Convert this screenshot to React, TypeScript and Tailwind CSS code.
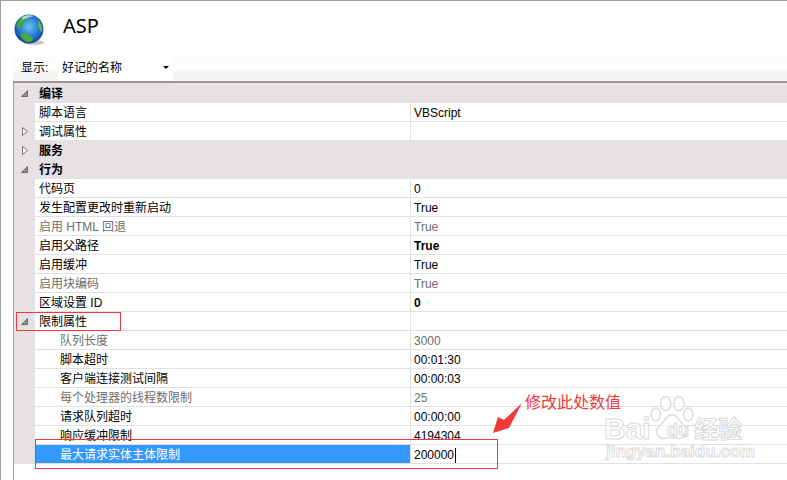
const FONT = "font-['Tahoma','Liberation_Sans','Noto_Sans_CJK_SC',sans-serif]"

type Row = {
  label: string
  value?: string
  kind?: 'group' | 'sub' | 'top'
  open?: boolean
  closed?: boolean
  muted?: boolean
  bold?: boolean
  selected?: boolean
}

const rows: Row[] = [
  { label: '编译', kind: 'group', open: true },
  { label: '脚本语言', value: 'VBScript' },
  { label: '调试属性', closed: true },
  { label: '服务', kind: 'group', closed: true },
  { label: '行为', kind: 'group', open: true },
  { label: '代码页', value: '0' },
  { label: '发生配置更改时重新启动', value: 'True' },
  { label: '启用 HTML 回退', value: 'True', muted: true },
  { label: '启用父路径', value: 'True', bold: true },
  { label: '启用缓冲', value: 'True' },
  { label: '启用块编码', value: 'True', muted: true },
  { label: '区域设置 ID', value: '0', bold: true },
  { label: '限制属性', open: true },
  { label: '队列长度', value: '3000', kind: 'sub', muted: true },
  { label: '脚本超时', value: '00:01:30', kind: 'sub' },
  { label: '客户端连接测试间隔', value: '00:00:03', kind: 'sub' },
  { label: '每个处理器的线程数限制', value: '25', kind: 'sub', muted: true },
  { label: '请求队列超时', value: '00:00:00', kind: 'sub' },
  { label: '响应缓冲限制', value: '4194304', kind: 'sub' },
  { label: '最大请求实体主体限制', value: '200000', kind: 'sub', selected: true },
]

function Globe() {
  return (
    <svg width="32" height="32" viewBox="0 0 32 32">
      <defs>
        <radialGradient id="sea" cx="50%" cy="42%" r="58%">
          <stop offset="0" stopColor="#6fc3f2" />
          <stop offset="0.55" stopColor="#2a7fd6" />
          <stop offset="1" stopColor="#12409c" />
        </radialGradient>
      </defs>
      <ellipse cx="20" cy="28.5" rx="10" ry="2.5" fill="#8a8a8a" opacity="0.5" />
      <circle cx="15" cy="15" r="14.5" fill="url(#sea)" />
      <path d="M3 9 C6 3 12 0.5 17 1 C16 4 12 4 11 7 C10 11 7 12 5 15 C3 14 2 12 3 9 Z" fill="#3fa832" />
      <path d="M6 20 C10 18 14 20 18 23 C20 25 18 28 14 28 C10 27 7 24 6 20 Z" fill="#45ad38" />
      <path d="M24 7 C27 9 29 13 28 18 C26 18 24 14 24 7 Z" fill="#59b84a" />
      <path d="M8 3 C12 1 17 1 20 2 C16 3 12 4 8 6 Z" fill="#d6eefb" opacity="0.7" />
    </svg>
  )
}

function Caret({ open, closed }: { open?: boolean; closed?: boolean }) {
  if (open) {
    return (
      <svg width="7" height="7" viewBox="0 0 7 7">
        <path d="M6.5 .5V6.5H.5Z" fill="#8f8f8f" stroke="#555" strokeWidth="0.8" />
      </svg>
    )
  }
  if (closed) {
    return (
      <svg width="6" height="9" viewBox="0 0 6 9">
        <path d="M.5 .5L5.5 4.5L.5 8.5Z" fill="#fff" stroke="#666" strokeWidth="0.9" />
      </svg>
    )
  }
  return null
}

function PropertyRow({ row }: { row: Row }) {
  const group = row.kind === 'group'
  const text = row.muted ? 'text-[#6d6d6d]' : 'text-black'
  return (
    <div className={`flex h-[19px] ${group ? 'bg-[#e5e1e5]' : ''}`}>
      <div className="flex w-[21px] shrink-0 items-center justify-center bg-[#e5e1e5]">
        <Caret open={row.open} closed={row.closed} />
      </div>
      <div
        className={`flex w-[375px] shrink-0 items-center border-b pt-[2px] ${
          row.kind === 'sub' ? 'pl-[25px]' : 'pl-1'
        } ${row.selected ? 'bg-[#3399ff] text-white' : text} ${
          group ? 'border-transparent font-bold' : 'border-[#e0e0e0]'
        }`}
      >
        {row.label}
      </div>
      <div
        className={`flex flex-1 items-center pt-[2px] pl-[3px] ${group ? '' : 'border-b border-l border-[#e0e0e0]'} ${text} ${
          row.bold ? 'font-bold' : ''
        }`}
      >
        {row.value}
        {row.selected && <span className="ml-px h-[15px] w-px bg-black" />}
      </div>
    </div>
  )
}

function Watermark() {
  return (
    <div className="absolute left-[599px] top-[394px] h-[70px] w-[150px]">
      <svg className="absolute left-[50px] top-0" width="44" height="46" viewBox="0 0 76 76" fill="#ffffff" fillOpacity="0.75" stroke="#e0e0e0" strokeWidth="3">
        <ellipse cx="10" cy="32" rx="8" ry="11" />
        <ellipse cx="27" cy="13" rx="9" ry="12" />
        <ellipse cx="50" cy="13" rx="9" ry="12" />
        <ellipse cx="66" cy="32" rx="8" ry="11" />
        <path d="M38 32 C28 32 26 44 16 52 C6 62 14 75 28 73 C35 71 41 71 48 73 C62 75 70 62 60 52 C50 44 48 32 38 32 Z" />
      </svg>
      <span className="absolute left-[4px] top-[19px] text-[30px] leading-none font-bold text-white/75 [-webkit-text-stroke:1px_#dcdcdc] font-['Liberation_Sans']">Bai</span>
      <span className="absolute left-[67px] top-[26px] text-[18px] leading-none font-bold text-white/75 [-webkit-text-stroke:1px_#d8d8d8] font-['Liberation_Sans']">du</span>
      <span className="absolute left-[94px] top-[21px] text-[24px] leading-none font-bold text-white/75 [-webkit-text-stroke:1px_#d8d8d8] font-['Noto_Sans_CJK_SC']">经验</span>
      <span className="absolute left-[6px] top-[48px] text-[17px] leading-none font-bold text-white/75 [-webkit-text-stroke:1px_#dddddd] font-['Liberation_Sans']">jingyan.baidu.com</span>
    </div>
  )
}

export default function App() {
  return (
    <div className={`relative flex h-[480px] w-[787px] flex-col overflow-hidden border-t border-l border-[#a0a0a0] bg-white text-[12px] leading-none ${FONT}`}>
      <div className="flex h-[56px] items-start pt-[13px] pl-[13px]">
        <Globe />
        <h1 className="ml-[17px] text-[20px] leading-[24px] font-['Noto_Sans'] text-black">ASP</h1>
      </div>
      <div className="ml-[12px] flex h-[24px] items-start bg-[linear-gradient(#fefbfe_14px,#f5f5f5_14px)] pl-[8px]">
        <span className="w-[37px] pt-[5px]">显示:</span>
        <div className="flex h-[24px] w-[115px] items-start justify-between bg-white px-[4px] pt-[5px]">
          好记的名称
          <span className="mt-[4px] h-0 w-0 border-x-[3px] border-t-[3px] border-x-transparent border-t-black" />
        </div>
      </div>
      <div className="ml-[12px] flex-1 border-l border-[#a0a0a0]">
        <div className="h-[3px] border-t-2 border-[#9a969a] bg-[#e5e1e5]" />
        {rows.map((row) => (
          <PropertyRow key={row.label} row={row} />
        ))}
      </div>
      <div className="absolute left-[15px] top-[311px] h-[19px] w-[105px] border border-[#f03a3a]" />
      <div className="absolute left-[34px] top-[438px] h-[30px] w-[463px] border border-[#f03a3a]" />
      <Watermark />
      <svg className="absolute left-[489px] top-[399px]" width="36" height="36" viewBox="0 0 36 36">
        <path d="M32 3 L19 28 L3 33 L8 17 L14 20 Z" fill="#f03a3a" />
      </svg>
      <span className="absolute left-[524px] top-[391px] text-[16px] leading-[18px] text-[#f03a3a] font-['Noto_Sans_CJK_SC']">修改此处数值</span>
    </div>
  )
}
